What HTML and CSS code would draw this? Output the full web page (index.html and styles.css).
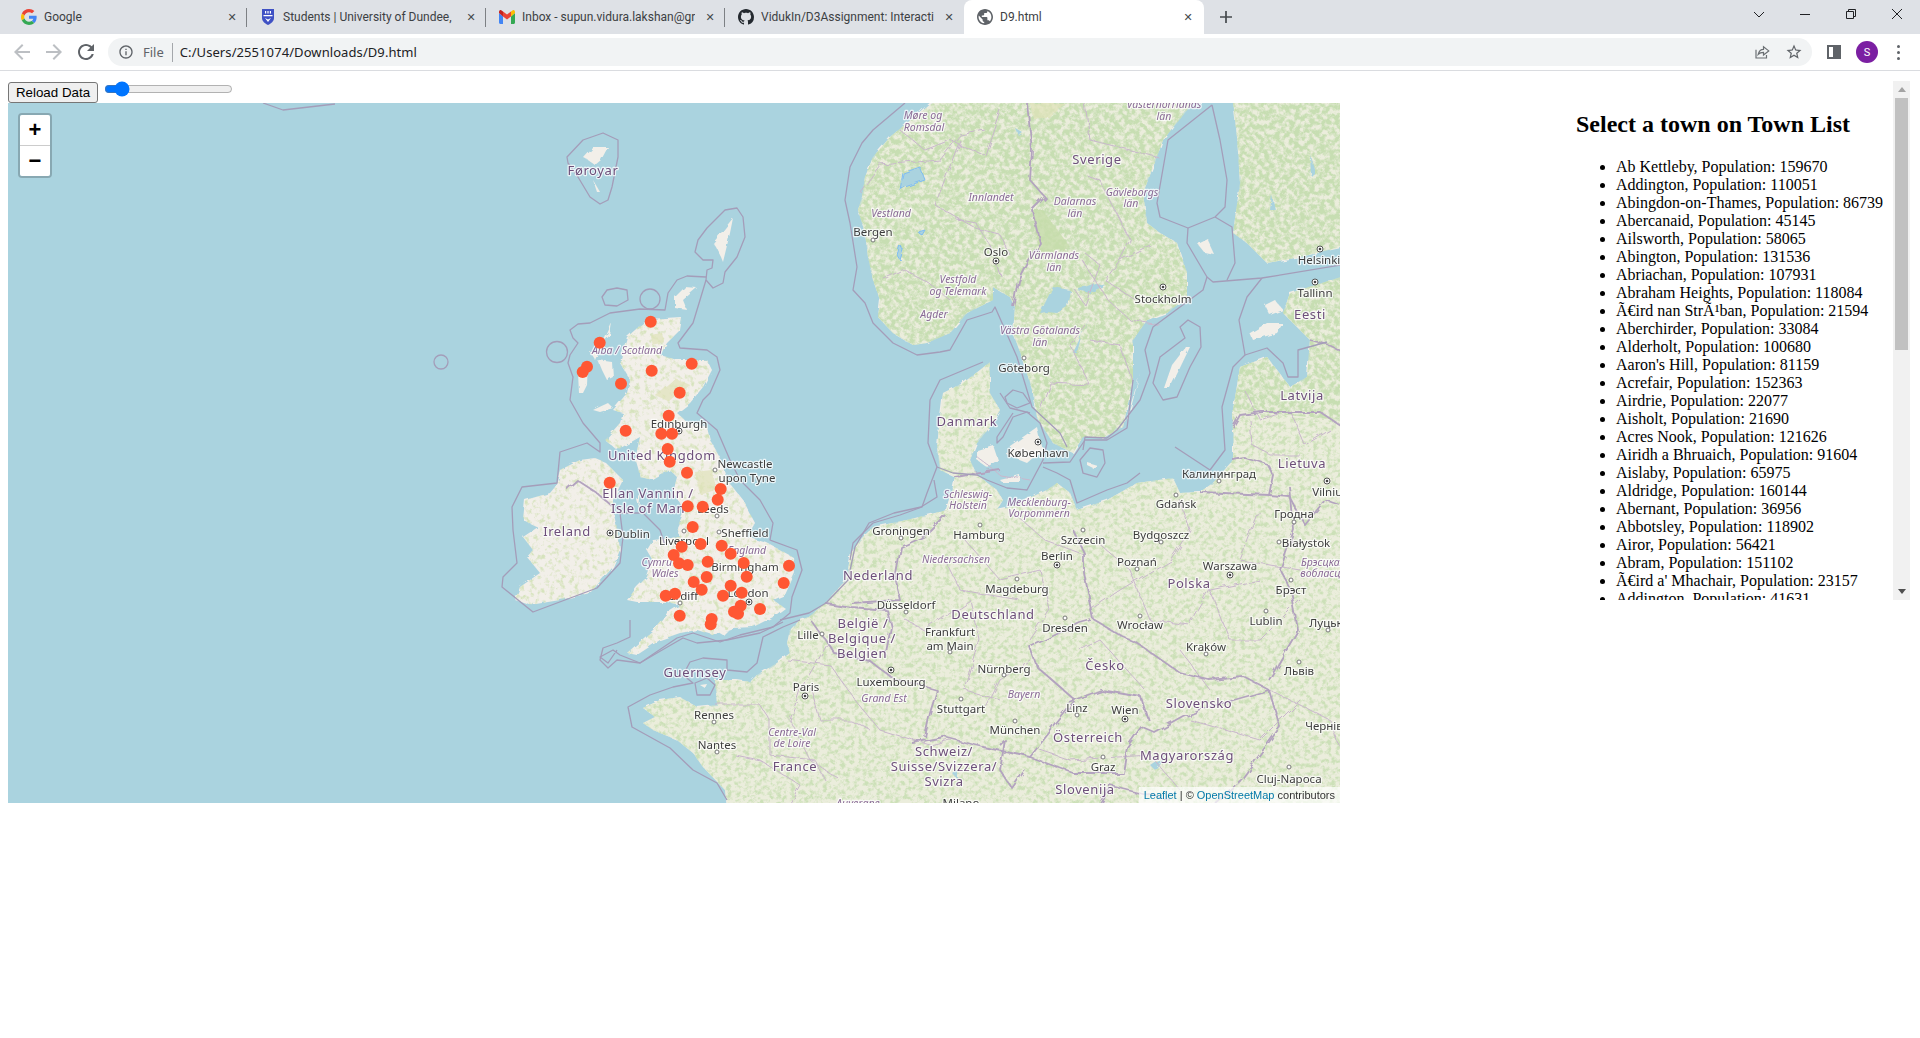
FILE: index.html
```html
<!DOCTYPE html>
<html lang="en">
<head>
<meta charset="utf-8">
<title>D9.html</title>
<link rel="stylesheet" href="styles.css">
</head>
<body>
<header class="chrome">
  <div class="tabstrip">
    <div class="tab sep">
      <svg class="favicon" viewBox="0 0 48 48"><path fill="#EA4335" d="M24 9.5c3.54 0 6.71 1.22 9.21 3.6l6.85-6.85C35.9 2.38 30.47 0 24 0 14.62 0 6.51 5.38 2.56 13.22l7.98 6.19C12.43 13.72 17.74 9.5 24 9.5z"/><path fill="#4285F4" d="M46.98 24.55c0-1.57-.15-3.09-.38-4.55H24v9.02h12.94c-.58 2.96-2.26 5.48-4.78 7.18l7.73 6c4.51-4.18 7.09-10.36 7.09-17.65z"/><path fill="#FBBC05" d="M10.53 28.59c-.48-1.45-.76-2.99-.76-4.59s.27-3.14.76-4.59l-7.98-6.19C.92 16.46 0 20.12 0 24c0 3.88.92 7.54 2.56 10.78l7.97-6.19z"/><path fill="#34A853" d="M24 48c6.48 0 11.93-2.13 15.89-5.81l-7.73-6c-2.15 1.45-4.92 2.3-8.16 2.3-6.26 0-11.57-4.22-13.47-9.91l-7.98 6.19C6.51 42.62 14.62 48 24 48z"/></svg>
      <span class="tabtitle">Google</span><span class="tabclose">✕</span>
    </div>
    <div class="tab sep">
      <svg class="favicon" viewBox="0 0 16 16"><path fill="#3f51c4" d="M2 0h12v9c0 3.5-3 5.5-6 7-3-1.500-6-3.500-6-7z"/><path fill="#fff" d="M3.500 6h9v1.200h-9zM5 2h1.200v2.500H5zM7.400 2h1.200v2.500H7.400zM9.800 2H11v2.500H9.800zM5 9l3 4 3-4-3 1.500z"/></svg>
      <span class="tabtitle">Students | University of Dundee,</span><span class="tabclose">✕</span>
    </div>
    <div class="tab sep">
      <svg class="favicon" viewBox="0 0 16 14"><path fill="#4285f4" d="M0 3v9.500C0 13.300.7 14 1.500 14H4V6.500z"/><path fill="#34a853" d="M12 6.500V14h2.500c.8 0 1.500-.7 1.500-1.500V3z"/><path fill="#ea4335" d="M4 6.500 8 9.500l4-3V1.500L8 4.500 4 1.500z"/><path fill="#c5221f" d="M0 3l4 3.500v-5L2.500.4C1.300-.5 0 .5 0 2z"/><path fill="#fbbc04" d="M16 3l-4 3.500v-5L13.500.4C14.700-.5 16 .5 16 2z"/></svg>
      <span class="tabtitle">Inbox - supun.vidura.lakshan@gr</span><span class="tabclose">✕</span>
    </div>
    <div class="tab">
      <svg class="favicon" viewBox="0 0 16 16"><path fill="#24292f" d="M8 0C3.58 0 0 3.58 0 8c0 3.54 2.29 6.53 5.47 7.59.4.07.55-.17.55-.38 0-.19-.01-.82-.01-1.49-2.01.37-2.53-.49-2.69-.94-.09-.23-.48-.94-.82-1.13-.28-.15-.68-.52-.01-.53.63-.01 1.08.58 1.23.82.72 1.21 1.87.87 2.33.66.07-.52.28-.87.51-1.07-1.78-.2-3.64-.89-3.64-3.95 0-.87.31-1.59.82-2.15-.08-.2-.36-1.02.08-2.12 0 0 .67-.21 2.2.82.64-.18 1.32-.27 2-.27.68 0 1.36.09 2 .27 1.53-1.04 2.2-.82 2.2-.82.44 1.1.16 1.92.08 2.12.51.56.82 1.27.82 2.15 0 3.07-1.87 3.75-3.65 3.95.29.25.54.73.54 1.48 0 1.07-.01 1.93-.01 2.2 0 .21.15.46.55.38A8.013 8.013 0 0016 8c0-4.42-3.58-8-8-8z"/></svg>
      <span class="tabtitle">VidukIn/D3Assignment: Interactiv</span><span class="tabclose">✕</span>
    </div>
    <div class="tab active">
      <svg class="favicon" viewBox="2 2 20 20"><path fill="#5f6368" d="M12 2C6.48 2 2 6.48 2 12s4.48 10 10 10 10-4.48 10-10S17.52 2 12 2zm-1 17.930c-3.950-.49-7-3.850-7-7.930 0-.62.08-1.210.21-1.790L9 15v1c0 1.100.9 2 2 2v1.930zm6.900-2.540c-.26-.81-1-1.390-1.900-1.390h-1v-3c0-.55-.45-1-1-1H8v-2h2c.55 0 1-.45 1-1V7h2c1.100 0 2-.9 2-2v-.41c2.930 1.190 5 4.060 5 7.410 0 2.080-.8 3.970-2.100 5.390z"/></svg>
      <span class="tabtitle">D9.html</span><span class="tabclose">✕</span>
    </div>
    <svg class="newtab" viewBox="0 0 14 14"><path d="M7 1v12M1 7h12"/></svg>
    <div class="winctl">
      <svg viewBox="0 0 12 12"><path d="M1 4l5 5 5-5"/></svg>
      <svg viewBox="0 0 12 12"><path d="M1 6.500h10"/></svg>
      <svg viewBox="0 0 12 12"><path d="M1.500 3.500h7v7h-7zM3.500 3.500v-2h7v7h-2"/></svg>
      <svg viewBox="0 0 12 12"><path d="M1 1l10 10M11 1L1 11"/></svg>
    </div>
  </div>
  <div class="toolbar">
    <svg class="tbicon faint" viewBox="0 0 24 24"><path d="M20 11H7.830l5.590-5.590L12 4l-8 8 8 8 1.410-1.410L7.830 13H20v-2z"/></svg>
    <svg class="tbicon faint" viewBox="0 0 24 24"><path d="M12 4l-1.410 1.410L16.170 11H4v2h12.170l-5.580 5.590L12 20l8-8z"/></svg>
    <svg class="tbicon" viewBox="0 0 24 24"><path d="M17.650 6.350C16.200 4.900 14.210 4 12 4c-4.420 0-7.990 3.580-7.990 8s3.570 8 7.990 8c3.730 0 6.840-2.550 7.730-6h-2.080c-.82 2.330-3.040 4-5.650 4-3.310 0-6-2.690-6-6s2.690-6 6-6c1.660 0 3.140.69 4.220 1.780L13 11h7V4l-2.350 2.350z"/></svg>
    <div class="omnibox">
      <svg class="omniinfo" viewBox="0 0 24 24"><path d="M11 7h2v2h-2zm0 4h2v6h-2zm1-9C6.480 2 2 6.480 2 12s4.480 10 10 10 10-4.480 10-10S17.520 2 12 2zm0 18c-4.410 0-8-3.590-8-8s3.590-8 8-8 8 3.590 8 8-3.590 8-8 8z"/></svg>
      <span class="scheme">File</span>
      <span class="url">C:/Users/2551074/Downloads/D9.html</span>
      <svg class="omniaction share" viewBox="0 0 24 24"><path d="M4 9v11h14v-4M7 15c1-4 4-6.500 7-6.500V5l7 5.500-7 5.500v-3.500c-3 0-5 .5-7 2.500z"/></svg>
      <svg class="omniaction star" viewBox="0 0 24 24"><path d="M22 9.240l-7.190-.62L12 2 9.190 8.630 2 9.240l5.460 4.730L5.820 21 12 17.270 18.180 21l-1.630-7.030L22 9.240zM12 15.400l-3.760 2.270 1-4.280-3.320-2.880 4.380-.38L12 6.100l1.710 4.040 4.380.38-3.320 2.880 1 4.280L12 15.400z"/></svg>
    </div>
    <div class="sidepanel"><span></span></div>
    <div class="avatar">S</div>
    <div class="kebab"><i></i><i></i><i></i></div>
  </div>
</header>

<main class="page">
  <section class="left">
    <div class="controls">
      <button class="reload" type="button">Reload Data</button>
      <input class="slider" type="range" min="0" max="100" value="9">
    </div>
    <div class="map">
      <svg class="mapsvg" viewBox="8 103 1332 700" width="1332" height="700">
        <defs>
          <filter id="rough" x="0" y="0" width="1" height="1"><feTurbulence type="fractalNoise" baseFrequency="0.09" numOctaves="3" seed="4"/><feDisplacementMap in="SourceGraphic" scale="5"/></filter>
          <filter id="wiggle" x="0" y="0" width="1" height="1"><feTurbulence type="fractalNoise" baseFrequency="0.07" numOctaves="3" seed="9"/><feDisplacementMap in="SourceGraphic" scale="7"/></filter>
          <filter id="forestDense" x="0" y="0" width="1" height="1" color-interpolation-filters="sRGB"><feTurbulence type="fractalNoise" baseFrequency="0.2" numOctaves="4" seed="7"/><feColorMatrix values="0 0 0 0 .78  0 0 0 0 .87  0 0 0 0 .70  3.500 0 0 0 -1.150"/></filter>
          <filter id="forestMid" x="0" y="0" width="1" height="1" color-interpolation-filters="sRGB"><feTurbulence type="fractalNoise" baseFrequency="0.22" numOctaves="4" seed="11"/><feColorMatrix values="0 0 0 0 .80  0 0 0 0 .88  0 0 0 0 .72  3.500 0 0 0 -1.500"/></filter>
          <filter id="forestLight" x="0" y="0" width="1" height="1" color-interpolation-filters="sRGB"><feTurbulence type="fractalNoise" baseFrequency="0.2" numOctaves="4" seed="3"/><feColorMatrix values="0 0 0 0 .84  0 0 0 0 .89  0 0 0 0 .74  3.500 0 0 0 -1.700"/></filter>
          <g id="cap"><circle class="cap-ring" r="3"/><circle class="cap-dot" r="1.300"/></g>
          <clipPath id="clipNorth"><polygon points="933,103 907,123 890,137 873,157 865,177 862,197 858,210 865,233 868,257 873,280 880,300 878,317 893,333 913,345 927,343 950,333 967,313 993,300 993,287 1010,297 1015,307 1013,333 1023,360 1033,393 1037,417 1053,443 1073,453 1083,437 1103,438 1123,427 1133,380 1133,340 1147,320 1167,313 1187,297 1187,273 1177,243 1160,233 1147,223 1143,193 1157,157 1163,140 1193,103"/><polygon points="1233,103 1237,137 1240,183 1233,233 1247,243 1267,263 1300,257 1341,247 1341,103"/><polygon points="1233,410 1240,367 1267,357 1290,387 1307,377 1310,340 1283,313 1290,293 1341,277 1341,420"/></clipPath>
          <clipPath id="clipCont"><polygon points="727,803 725,790 703,767 693,753 677,740 653,730 643,723 655,717 643,708 660,700 680,697 697,707 717,705 715,680 737,680 750,682 757,675 777,663 790,653 787,643 790,630 800,620 809,617 825,603 846,580 851,553 860,540 873,527 907,520 947,510 950,500 955,477 940,470 937,447 940,417 943,393 963,383 980,370 990,362 990,393 1000,410 990,427 977,443 970,460 977,475 997,490 1003,500 997,510 1010,507 1047,490 1057,483 1070,493 1077,510 1107,500 1137,483 1173,478 1180,493 1200,492 1213,483 1233,460 1233,433 1232,410 1341,420 1341,803"/></clipPath>
          <clipPath id="clipUk"><polygon points="643,323 650,320 682,318 680,330 667,343 660,355 677,360 707,360 712,370 703,387 690,403 677,413 687,422 707,427 710,440 720,457 727,480 743,500 755,523 747,537 767,543 793,557 795,573 785,595 773,600 785,608 773,617 753,627 733,628 713,635 697,630 680,633 660,640 637,655 627,653 653,630 667,613 680,605 667,602 637,602 627,600 637,587 647,577 653,560 647,550 653,540 680,537 677,527 685,510 673,493 677,477 670,470 653,480 640,477 635,460 640,437 617,450 605,440 620,423 623,413 613,410 627,393 630,380 620,363 623,350 627,337"/><polygon points="580,460 595,458 605,462 623,480 613,500 613,510 618,533 620,550 613,567 590,593 560,600 530,605 515,600 520,587 540,573 527,557 533,550 523,537 538,527 523,520 525,500 550,493 555,487 560,470"/></clipPath>
        </defs>

        <rect class="sea" x="8" y="103" width="1332" height="700"/>

        <g class="land" filter="url(#rough)">
          <polygon points="933,100 907,123 890,137 873,157 865,177 862,197 858,210 865,233 868,257 873,280 880,300 878,317 893,333 913,345 927,343 950,333 967,313 993,300 993,287 1010,297 1015,307 1013,333 1023,360 1033,393 1037,417 1053,443 1073,453 1083,437 1103,438 1123,427 1133,380 1133,340 1147,320 1167,313 1187,297 1187,273 1177,243 1160,233 1147,223 1143,193 1157,157 1163,140 1193,100"/>
          <polygon points="1233,100 1237,137 1240,183 1233,233 1247,243 1267,263 1300,257 1345,247 1345,100"/>
          <polygon points="727,810 725,790 703,767 693,753 677,740 653,730 643,723 655,717 643,708 660,700 680,697 697,707 717,705 715,680 737,680 750,682 757,675 777,663 790,653 787,643 790,630 800,620 809,617 825,603 846,580 851,553 860,540 873,527 907,520 947,510 950,500 955,477 940,470 937,447 940,417 943,393 963,383 980,370 990,362 990,393 1000,410 990,427 977,443 970,460 977,475 997,490 1003,500 997,510 1010,507 1047,490 1057,483 1070,493 1077,510 1107,500 1137,483 1173,478 1180,493 1200,492 1213,483 1233,460 1233,433 1233,410 1240,367 1267,357 1290,387 1307,377 1310,340 1283,313 1290,293 1345,277 1345,810"/>
          <polygon points="643,323 650,320 682,318 680,330 667,343 660,355 677,360 707,360 712,370 703,387 690,403 677,413 687,422 707,427 710,440 720,457 727,480 743,500 755,523 747,537 767,543 793,557 795,573 785,595 773,600 785,608 773,617 753,627 733,628 713,635 697,630 680,633 660,640 637,655 627,653 653,630 667,613 680,605 667,602 637,602 627,600 637,587 647,577 653,560 647,550 653,540 680,537 677,527 685,510 673,493 677,477 670,470 653,480 640,477 635,460 640,437 617,450 605,440 620,423 623,413 613,410 627,393 630,380 620,363 623,350 627,337"/>
          <polygon points="580,460 595,458 605,462 623,480 613,500 613,510 618,533 620,550 613,567 590,593 560,600 530,605 515,600 520,587 540,573 527,557 533,550 523,537 538,527 523,520 525,500 550,493 555,487 560,470"/>
        </g>
        <g class="land islands" filter="url(#rough)">
          <polygon points="595,360 612,323 610,335 595,352 590,352"/>
          <polygon points="578,373 588,363 587,385 583,393 579,393"/>
          <polygon points="598,360 612,362 613,377 607,380 602,370"/>
          <polygon points="593,410 608,403 613,408 600,412"/>
          <polygon points="637,500 641,494 639,507"/>
          <polygon points="678,543 690,538 694,545 682,549"/>
          <polygon points="718,632 728,630 723,635"/>
          <polygon points="583,157 592,147 608,147 601,160 595,165 585,158"/>
          <polygon points="593,180 600,192 597,192"/>
          <polygon points="713,243 733,218 730,233 723,262 721,257 716,247"/>
          <polygon points="675,297 685,287 697,288 683,300 687,310 675,308"/>
          <polygon points="1010,446 1037,427 1042,450 1027,463 1007,455"/>
          <polygon points="977,450 993,445 998,460 987,467 977,460"/>
          <polygon points="1000,480 1020,475 1020,483 1003,483"/>
          <polygon points="1087,462 1097,465 1093,468 1087,465"/>
          <polygon points="1164,388 1172,365 1186,347 1190,347 1178,372 1170,388"/>
          <polygon points="1127,417 1140,373 1133,400 1128,420"/>
          <polygon points="1197,243 1207,238 1215,255 1205,253"/>
          <polygon points="1250,333 1267,323 1283,323 1277,333 1253,340"/>
          <polygon points="1265,305 1275,300 1283,310 1270,315"/>
          <polygon points="700,685 707,684 705,688"/>
        </g>

        <g clip-path="url(#clipNorth)"><rect class="tint" x="840" y="100" width="510" height="360"/><rect x="840" y="100" width="510" height="360" filter="url(#forestDense)"/></g>
        <g clip-path="url(#clipCont)"><rect class="tint" x="640" y="360" width="710" height="450"/><rect x="640" y="360" width="710" height="450" filter="url(#forestMid)"/></g>
        <g clip-path="url(#clipUk)"><rect x="510" y="310" width="290" height="350" filter="url(#forestLight)"/></g>

        <g class="patches" filter="url(#rough)">
          <polygon class="p-green" points="1033,210 1043,210 1070,247 1040,253 1036,235"/>
          <polygon class="p-sand" points="1030,103 1065,103 1050,118 1033,118"/>
          <polygon class="p-sand" points="650,335 662,333 664,342 652,345"/>
          <polygon class="p-sand" points="655,395 675,378 690,385 670,402"/>
          <polygon class="p-sand" points="695,472 712,470 715,490 700,495"/>
        </g>

        <g class="water" filter="url(#rough)">
          <polygon points="1040,313 1053,287 1070,290 1067,307 1057,313 1047,312"/>
          <polygon points="1073,353 1090,317 1082,333 1077,353"/>
          <polygon points="1077,290 1095,283 1105,285 1090,293"/>
          <polygon class="lake" points="900,190 903,173 920,167 925,180 905,187"/>
          <polygon class="lake" points="897,255 900,245 903,250 900,260"/>
          <polygon class="lake" points="918,232 925,230 922,235"/>
          <polygon points="1015,128 1022,132 1018,135"/>
          <polygon points="1270,210 1272,195 1275,210"/>
          <polygon points="1310,155 1315,172 1311,176"/>
          <polygon points="953,774 958,770 958,780"/>
          <polygon points="1150,765 1165,755 1155,770"/>
        </g>

        <g class="reg" filter="url(#wiggle)">
          <polyline points="900,130 925,150 950,140 985,155 1000,110"/>
          <polyline points="860,192 880,165 905,163 940,160 960,135 985,130"/>
          <polyline points="960,140 935,205 980,230 1000,235 1010,255"/>
          <polyline points="885,280 905,270 925,280 950,300"/>
          <polyline points="955,218 975,222 990,245 1000,275"/>
          <polyline points="1085,103 1090,140 1130,150 1160,158"/>
          <polyline points="1086,175 1100,180 1130,240 1120,260 1150,245"/>
          <polyline points="1085,253 1100,265 1085,305 1075,290"/>
          <polyline points="1082,260 1108,300 1130,320 1160,325"/>
          <polyline points="1120,260 1105,280 1135,300"/>
          <polyline points="1085,325 1070,345 1090,385 1050,383 1040,410"/>
          <polyline points="1090,340 1120,345 1132,380"/>
          <polyline points="975,455 1000,475 1030,480"/>
          <polyline points="1247,393 1260,420 1290,410 1305,445 1330,430"/>
          <polyline points="1250,420 1252,445 1270,455 1300,455"/>
          <polyline points="830,640 800,690 790,720 810,760 840,780"/>
          <polyline points="787,660 830,665 855,700 880,730 930,745 950,740"/>
          <polyline points="715,705 760,705 770,720 770,755 815,760 825,780"/>
          <polyline points="810,685 820,720 850,720 870,730"/>
          <polyline points="735,755 760,760 800,785 790,803"/>
          <polyline points="905,620 925,630 970,600 980,640 965,690 1000,700"/>
          <polyline points="965,540 1000,580 1040,570 1050,610 1030,640"/>
          <polyline points="1010,510 1045,540 1085,555"/>
          <polyline points="945,560 960,590 1020,600"/>
          <polyline points="985,710 1000,680 1030,660"/>
          <polyline points="1090,610 1120,590 1170,560 1190,530 1180,500"/>
          <polyline points="1095,540 1130,570 1150,620 1190,625 1210,590 1260,580"/>
          <polyline points="1210,590 1230,640 1260,640 1300,600"/>
          <polyline points="1180,650 1210,690"/>
          <polyline points="1260,510 1240,560 1300,570"/>
          <polyline points="1080,650 1100,640 1145,690"/>
          <polyline points="1190,720 1260,740 1300,700"/>
          <polyline points="1040,750 1070,760 1150,755 1180,790"/>
          <polyline points="1270,690 1330,720 1340,750"/>
        </g>

        <g class="ctry" filter="url(#wiggle)">
          <polyline points="1027,103 1032,150 1030,180 1045,197 1032,210 1040,243 1028,260 1018,280 1013,307"/>
          <polyline points="566,490 577,480 597,493 613,507"/>
          <polyline points="810,620 826,640 834,653 869,660 891,677 937,690 930,713 925,737"/>
          <polyline points="826,603 851,607 887,610 891,627 885,657"/>
          <polyline points="851,603 900,600 895,580 901,547 923,537 945,515"/>
          <polyline points="912,743 944,737 983,747 1030,757 1075,700 1037,667 1030,647 1080,623 1091,620"/>
          <polyline points="1073,530 1084,553 1084,573 1094,620"/>
          <polyline points="1094,620 1123,637 1137,643 1180,673 1209,680 1244,677 1269,690"/>
          <polyline points="1269,690 1209,707 1184,717 1155,733 1141,727 1127,747 1123,773 1073,773 1030,757"/>
          <polyline points="1066,703 1101,690 1141,697 1148,720"/>
          <polyline points="1280,570 1291,590 1298,630 1269,680"/>
          <polyline points="1290,487 1294,530 1280,570"/>
          <polyline points="1200,492 1270,495 1269,494"/>
          <polyline points="1233,460 1245,458 1268,465 1273,475 1269,495 1290,497 1305,525 1325,500 1340,505"/>
          <polyline points="1233,427 1240,415 1262,412 1320,412 1340,425"/>
          <polyline points="1269,690 1280,727 1241,780"/>
          <polyline points="1241,780 1215,803"/>
          <polyline points="1100,803 1110,785 1170,800"/>
          <polyline points="1310,340 1330,345 1340,350"/>
          <polyline points="955,477 1000,470"/>
          <polyline points="1000,745 1005,740 1000,770 1012,788 1025,770"/>
        </g>

        <g class="mar">
          <polyline points="263,103 283,110 335,104"/>
          <polygon points="567,157 583,140 603,133 618,140 618,157 612,187 608,200 600,204 590,197 578,177 568,163"/>
          <polygon points="713,260 703,260 695,252 698,240 707,228 725,210 737,208 743,217 745,237 737,257 725,272 723,283 713,288 706,280 707,270 712,268"/>
          <polyline points="706,277 687,276 677,280 668,293 665,310 640,309 610,313 590,323 578,324 570,330 573,338 578,343 570,355 568,363 573,377 570,400"/>
          <polyline points="706,280 700,300 693,323 678,343 680,348 707,350 717,357 720,370 710,393 703,400 697,413 717,430 730,460 740,480 760,500 773,523 770,540 797,550 802,570 792,597 790,613 773,627 740,635 720,642 693,633 677,638 640,663 620,655 613,650 600,657 608,663 617,650"/>
          <polyline points="570,400 583,423 600,443 600,452 587,443 560,452 557,483 522,487 512,507 513,530 517,563 503,577 502,587 533,612 597,588 620,563 623,537 620,513 643,513 660,530 665,545"/>
          <polygon points="602,297 607,290 617,288 627,290 628,300 617,306 605,305"/>
          <circle cx="650" cy="299" r="10"/>
          <circle cx="557" cy="352" r="10.500"/>
          <circle cx="441" cy="362" r="7"/>
          <polyline points="905,103 873,130 862,143 850,167 845,200 850,223 857,267 853,290 865,303 873,323 893,343 917,355 940,352 950,350 967,320 992,312 995,307 1017,357 1032,407 1060,433 1067,447"/>
          <polyline points="1212,105 1168,140 1157,203 1160,217 1188,228 1215,217 1225,207 1227,180 1220,140 1212,105"/>
          <polyline points="1188,228 1187,243 1207,277 1213,282 1262,278 1341,265"/>
          <polyline points="1215,217 1232,227 1235,263 1227,280"/>
          <polyline points="1207,277 1203,290 1153,327 1145,350 1150,373 1140,400 1117,430 1107,438 1085,437 1083,450"/>
          <polygon points="1185,338 1180,327 1188,320 1200,327 1201,347 1190,367 1177,397 1163,400 1153,383 1160,357"/>
          <polyline points="1262,278 1247,297 1239,320 1245,355 1233,367 1222,407 1225,450 1210,470 1175,447"/>
          <polyline points="1245,355 1267,348 1283,363 1288,377 1298,377 1298,350 1327,342"/>
          <polyline points="983,362 940,380 930,400 928,443 937,467 927,493 922,507 900,515 873,523 853,543 850,560"/>
          <polyline points="780,620 809,613 826,603 848,580 855,547 869,523 894,513 921,507 937,497 934,480"/>
          <polyline points="1000,393 1010,408 1030,413"/>
          <polygon points="1005,397 1013,390 1023,393 1030,403 1017,408 1007,403"/>
          <polyline points="1013,413 997,437 997,443 1003,437 1013,417 1027,412 1040,423 1047,443 1043,460 1027,490 1007,488 987,480 977,475 953,473 937,467"/>
          <polyline points="1043,467 1057,473 1070,480 1077,503 1107,490 1127,483 1140,473"/>
          <polygon points="1080,460 1090,448 1103,450 1105,463 1097,477 1083,473"/>
          <polyline points="1043,463 1070,462 1085,440 1107,440 1127,428 1133,380"/>
          <polyline points="800,620 783,627 763,637 757,663 747,672 727,670 727,660 703,658 690,662 683,675 693,683 673,687 650,695 628,707 632,727 670,748 693,770 717,783 727,800"/>
          <polyline points="630,620 630,637 617,643 603,648 600,660 608,668 617,660 640,663 657,653 683,638 697,643 727,640 760,633 783,622 783,622"/>
          <polygon points="695,683 707,678 715,685 710,695 697,695"/>
        </g>

        <g class="labels">
          <g class="country">
            <text x="1097" y="159">Sverige</text><text x="967" y="421">Danmark</text><text x="662" y="455">United Kingdom</text><text x="648" y="493">Ellan Vannin /</text><text x="648" y="508">Isle of Man</text><text x="567" y="531">Ireland</text><text x="593" y="170">Føroyar</text><text x="1310" y="314">Eesti</text><text x="1302" y="395">Latvija</text><text x="1302" y="463">Lietuva</text><text x="878" y="575">Nederland</text><text x="863" y="623">België /</text><text x="862" y="638">Belgique /</text><text x="862" y="653">Belgien</text><text x="993" y="614">Deutschland</text><text x="1189" y="583">Polska</text><text x="1105" y="665">Česko</text><text x="1199" y="703">Slovensko</text><text x="1088" y="737">Österreich</text><text x="1187" y="755">Magyarország</text><text x="944" y="751">Schweiz/</text><text x="944" y="766">Suisse/Svizzera/</text><text x="944" y="781">Svizra</text><text x="1085" y="789">Slovenija</text><text x="795" y="766">France</text><text x="695" y="672">Guernsey</text>
          </g>
          <g class="city">
            <text x="873" y="231">Bergen</text><text x="996" y="251">Oslo</text><text x="1163" y="298">Stockholm</text><text x="1319" y="259">Helsinki</text><text x="1315" y="292">Tallinn</text><text x="1024" y="367">Göteborg</text><text x="1038" y="452">København</text><text x="679" y="423">Edinburgh</text><text x="745" y="463">Newcastle</text><text x="747" y="477">upon Tyne</text><text x="713" y="508">Leeds</text><text x="745" y="532">Sheffield</text><text x="632" y="533">Dublin</text><text x="684" y="540">Liverpool</text><text x="745" y="566">Birmingham</text><text x="748" y="592">London</text><text x="680" y="595">Cardiff</text><text x="808" y="634">Lille</text><text x="714" y="714">Rennes</text><text x="717" y="744">Nantes</text><text x="806" y="686">Paris</text><text x="891" y="681">Luxembourg</text><text x="901" y="530">Groningen</text><text x="979" y="534">Hamburg</text><text x="1083" y="539">Szczecin</text><text x="1161" y="534">Bydgoszcz</text><text x="1176" y="503">Gdańsk</text><text x="1294" y="513">Гродна</text><text x="1306" y="542">Białystok</text><text x="1219" y="473">Калининград</text><text x="1330" y="491">Vilnius</text><text x="1057" y="555">Berlin</text><text x="1137" y="561">Poznań</text><text x="1230" y="565">Warszawa</text><text x="1017" y="588">Magdeburg</text><text x="906" y="604">Düsseldorf</text><text x="950" y="631">Frankfurt</text><text x="950" y="645">am Main</text><text x="1065" y="627">Dresden</text><text x="1140" y="624">Wrocław</text><text x="1266" y="620">Lublin</text><text x="1326" y="622">Луцьк</text><text x="1291" y="589">Брэст</text><text x="1206" y="646">Kraków</text><text x="1299" y="670">Львів</text><text x="1004" y="668">Nürnberg</text><text x="961" y="708">Stuttgart</text><text x="1015" y="729">München</text><text x="1077" y="707">Linz</text><text x="1125" y="709">Wien</text><text x="1103" y="766">Graz</text><text x="1329" y="725">Чернівці</text><text x="1289" y="778">Cluj-Napoca</text><text x="961" y="802">Milano</text>
          </g>
          <g class="state">
            <text x="923" y="115">Møre og</text><text x="924" y="127">Romsdal</text><text x="991" y="197">Innlandet</text><text x="1075" y="201">Dalarnas</text><text x="1075" y="213">län</text><text x="1132" y="192">Gävleborgs</text><text x="1131" y="203">län</text><text x="1164" y="104">Västernorrlands</text><text x="1164" y="116">län</text><text x="891" y="213">Vestland</text><text x="1054" y="255">Värmlands</text><text x="1054" y="267">län</text><text x="958" y="279">Vestfold</text><text x="958" y="291">og Telemark</text><text x="934" y="314">Agder</text><text x="1040" y="330">Västra Götalands</text><text x="1040" y="342">län</text><text x="627" y="350">Alba / Scotland</text><text x="660" y="562">Cymru /</text><text x="665" y="573">Wales</text><text x="747" y="550">England</text><text x="968" y="494">Schleswig-</text><text x="968" y="505">Holstein</text><text x="1039" y="502">Mecklenburg-</text><text x="1039" y="513">Vorpommern</text><text x="956" y="559">Niedersachsen</text><text x="1024" y="694">Bayern</text><text x="884" y="698">Grand Est</text><text x="792" y="732">Centre-Val</text><text x="792" y="743">de Loire</text><text x="1323" y="562">Брэсцкая</text><text x="1323" y="573">вобласць</text><text x="858" y="803">Auvergne</text>
          </g>
        </g>

        <g class="pins">
          <circle cx="1024" cy="358" r="2"/><circle cx="873" cy="240" r="2"/><circle cx="715" cy="470" r="2"/><circle cx="717" cy="516" r="2"/><circle cx="684" cy="531" r="2"/><circle cx="719" cy="532" r="2"/><circle cx="680" cy="603" r="2"/><circle cx="822" cy="634" r="2"/><circle cx="714" cy="722" r="2"/><circle cx="717" cy="752" r="2"/><circle cx="901" cy="538" r="2"/><circle cx="980" cy="525" r="2"/><circle cx="1083" cy="530" r="2"/><circle cx="1161" cy="542" r="2"/><circle cx="1176" cy="495" r="2"/><circle cx="1294" cy="522" r="2"/><circle cx="1279" cy="542" r="2"/><circle cx="1219" cy="481" r="2"/><circle cx="1137" cy="569" r="2"/><circle cx="1017" cy="579" r="2"/><circle cx="906" cy="612" r="2"/><circle cx="950" cy="652" r="2"/><circle cx="1065" cy="618" r="2"/><circle cx="1140" cy="616" r="2"/><circle cx="1266" cy="611" r="2"/><circle cx="1328" cy="630" r="2"/><circle cx="1291" cy="580" r="2"/><circle cx="1206" cy="654" r="2"/><circle cx="1299" cy="662" r="2"/><circle cx="1004" cy="675" r="2"/><circle cx="961" cy="699" r="2"/><circle cx="1015" cy="721" r="2"/><circle cx="1077" cy="715" r="2"/><circle cx="1103" cy="757" r="2"/><circle cx="1289" cy="767" r="2"/>
        </g>
        <use href="#cap" x="996" y="261"/><use href="#cap" x="1163" y="287"/><use href="#cap" x="1320" y="249"/><use href="#cap" x="1315" y="282"/><use href="#cap" x="1038" y="442"/><use href="#cap" x="679" y="431"/><use href="#cap" x="610" y="533"/><use href="#cap" x="749" y="602"/><use href="#cap" x="805" y="696"/><use href="#cap" x="891" y="670"/><use href="#cap" x="1057" y="565"/><use href="#cap" x="1230" y="575"/><use href="#cap" x="1125" y="719"/><use href="#cap" x="1327" y="481"/>

        <g class="towns">
          <circle cx="650.700" cy="321.700" r="6"/><circle cx="599.700" cy="342.700" r="6"/><circle cx="587" cy="366.700" r="6"/><circle cx="582.700" cy="372" r="6"/><circle cx="651.700" cy="370.700" r="6"/><circle cx="691.700" cy="363.700" r="6"/><circle cx="621" cy="383.700" r="6"/><circle cx="679.700" cy="392.700" r="6"/><circle cx="668.700" cy="415.700" r="6"/><circle cx="625.700" cy="430.700" r="6"/><circle cx="661.300" cy="433.700" r="6"/><circle cx="672" cy="433.700" r="6"/><circle cx="667.700" cy="449" r="6"/><circle cx="669.700" cy="461.700" r="6"/><circle cx="687" cy="472.700" r="6"/><circle cx="609.700" cy="482.700" r="6"/><circle cx="720.700" cy="489" r="6"/><circle cx="717.700" cy="499.700" r="6"/><circle cx="687.700" cy="506.300" r="6"/><circle cx="702.700" cy="506.700" r="6"/><circle cx="692.700" cy="527" r="6"/><circle cx="681.700" cy="546.700" r="6"/><circle cx="700.700" cy="544" r="6"/><circle cx="721.700" cy="545.700" r="6"/><circle cx="730.700" cy="553.700" r="6"/><circle cx="673.700" cy="555" r="6"/><circle cx="679" cy="563.300" r="6"/><circle cx="687.700" cy="565" r="6"/><circle cx="707.700" cy="561.700" r="6"/><circle cx="743.700" cy="563" r="6"/><circle cx="789" cy="565.700" r="6"/><circle cx="746.700" cy="576.700" r="6"/><circle cx="706.700" cy="577" r="6"/><circle cx="783.700" cy="583" r="6"/><circle cx="693.700" cy="582" r="6"/><circle cx="730.700" cy="585.700" r="6"/><circle cx="701.700" cy="589.700" r="6"/><circle cx="741.700" cy="592.700" r="6"/><circle cx="723" cy="595.700" r="6"/><circle cx="665.700" cy="595.700" r="6"/><circle cx="675" cy="593.700" r="6"/><circle cx="740.700" cy="605.700" r="6"/><circle cx="734" cy="611.700" r="6"/><circle cx="738" cy="613.700" r="6"/><circle cx="760" cy="609" r="6"/><circle cx="679.700" cy="615.700" r="6"/><circle cx="711.700" cy="619" r="6"/><circle cx="710.700" cy="624.300" r="6"/>
        </g>
      </svg>
      <div class="zoomctl"><a class="zoomin">+</a><a class="zoomout">−</a></div>
      <div class="attrib"><a>Leaflet</a> | © <a>OpenStreetMap</a> contributors</div>
    </div>
  </section>

  <aside class="panel">
    <div class="listbox">
      <h2>Select a town on Town List</h2>
      <ul>
        <li>Ab Kettleby, Population: 159670</li>
        <li>Addington, Population: 110051</li>
        <li>Abingdon-on-Thames, Population: 86739</li>
        <li>Abercanaid, Population: 45145</li>
        <li>Ailsworth, Population: 58065</li>
        <li>Abington, Population: 131536</li>
        <li>Abriachan, Population: 107931</li>
        <li>Abraham Heights, Population: 118084</li>
        <li>Ã€ird nan StrÃ¹ban, Population: 21594</li>
        <li>Aberchirder, Population: 33084</li>
        <li>Alderholt, Population: 100680</li>
        <li>Aaron's Hill, Population: 81159</li>
        <li>Acrefair, Population: 152363</li>
        <li>Airdrie, Population: 22077</li>
        <li>Aisholt, Population: 21690</li>
        <li>Acres Nook, Population: 121626</li>
        <li>Airidh a Bhruaich, Population: 91604</li>
        <li>Aislaby, Population: 65975</li>
        <li>Aldridge, Population: 160144</li>
        <li>Abernant, Population: 36956</li>
        <li>Abbotsley, Population: 118902</li>
        <li>Airor, Population: 56421</li>
        <li>Abram, Population: 151102</li>
        <li>Ã€ird a' Mhachair, Population: 23157</li>
        <li>Addington, Population: 41631</li>
      </ul>
    </div>
    <div class="scrollbar">
      <span class="arrow up"></span>
      <span class="thumb"></span>
      <span class="arrow down"></span>
    </div>
  </aside>
</main>
</body>
</html>
```
FILE: styles.css
```css
* { box-sizing: border-box; }
html, body { margin: 0; height: 100%; background: #fff; overflow: hidden; }
body { font-family: "Liberation Serif", serif; }

/* Browser frame */
.chrome { height: 71px; font-family: "Roboto", sans-serif; color: #3c4043; }
.tabstrip { height: 34px; background: #dee1e6; display: flex; align-items: center; padding-left: 8px; }
.tab { width: 239px; height: 34px; padding: 0 7px 0 13px; display: flex; align-items: center; gap: 7px; font-size: 12px; position: relative; flex: none; }
.tab.sep::after { content: ""; position: absolute; right: 0; top: 8px; height: 19px; width: 1px; background: #7d8084; }
.tab.active { background: #fff; border-radius: 8px 8px 0 0; width: 240px; color: #3c4043; padding-right: 8px; }
.favicon { width: 16px; height: 16px; flex: none; }
.tabtitle { flex: 1; white-space: nowrap; overflow: hidden; min-width: 0; }
.tabclose { width: 16px; text-align: center; font-size: 11px; color: #45494d; flex: none; font-family: "DejaVu Sans", sans-serif; }
.newtab { width: 14px; height: 14px; margin-left: 15px; fill: none; stroke: #45494d; stroke-width: 1.700; }
.winctl { margin-left: auto; display: flex; align-items: center; padding-right: 17px; gap: 34px; margin-top: -6px; }
.winctl svg { width: 12px; height: 12px; fill: none; stroke: #202124; stroke-width: 1; }

.toolbar { height: 37px; background: #fff; border-bottom: 1px solid #dadce0; display: flex; align-items: center; padding: 0 0 0 10px; gap: 8px; }
.tbicon { width: 24px; height: 24px; flex: none; fill: #5f6368; }
.tbicon.faint { fill: #bcbfc3; }
.omnibox { width: 1704px; height: 28px; margin-left: 2px; background: #f1f3f4; border-radius: 14px; display: flex; align-items: center; padding-left: 10px; flex: none; }
.omniinfo { width: 16px; height: 16px; fill: #5f6368; flex: none; }
.scheme { font-size: 13px; color: #5f6368; margin-left: 9px; padding-right: 8px; border-right: 1px solid #a4a7ab; line-height: 19px; font-family: "Noto Sans", sans-serif; }
.url { font-size: 13px; color: #202124; margin-left: 7px; font-family: "Noto Sans", sans-serif; letter-spacing: .08px; }
.omniaction { width: 18px; height: 18px; flex: none; }
.share { margin-left: auto; fill: none; stroke: #6b6f73; stroke-width: 1.600; }
.star { margin: 0 9px 0 14px; fill: #5f6368; }
.sidepanel { width: 14px; height: 14px; margin-left: 7px; border: 2px solid #5f6368; display: flex; justify-content: flex-end; flex: none; }
.sidepanel span { width: 6px; background: #5f6368; }
.avatar { width: 22px; height: 22px; margin-left: 7px; border-radius: 50%; background: #7b1fa2; color: #fff; font-size: 11px; display: flex; align-items: center; justify-content: center; flex: none; }
.kebab { margin-left: 11px; display: flex; flex-direction: column; gap: 3px; flex: none; }
.kebab i { width: 3px; height: 3px; border-radius: 50%; background: #5f6368; display: block; }

/* Page */
.page { display: flex; align-items: flex-start; }
.left { width: 1340px; padding-left: 8px; flex: none; }
.controls { height: 32px; padding-top: 11px; display: flex; align-items: flex-start; }
.reload { width: 90px; height: 21px; padding: 0; font: 13.33px "Liberation Sans", sans-serif; color: #000; background: #efefef; border: 1px solid #767676; border-radius: 3px; }
.slider { width: 129px; height: 16px; margin: -1px 0 0 6px; }

.map { position: relative; width: 1332px; height: 700px; overflow: hidden; background: #aad3df; }
.mapsvg { display: block; }
.sea { fill: #aad3df; }
.land polygon { fill: #f2efe9; }
.tint { fill: #e3ebcf; opacity: .5; }
.patches .p-green { fill: #c6dcaa; opacity: .8; }
.patches .p-sand { fill: #dfe3b9; opacity: .7; }
.water polygon { fill: #aad3df; }
.water .lake { stroke: #7fbcf2; stroke-width: 1; }
.reg polyline { fill: none; stroke: #c9b7cc; stroke-width: 1; stroke-linejoin: round; }
.ctry polyline { fill: none; stroke: #b3a3bf; stroke-width: 1.800; stroke-linejoin: round; }
.mar polyline, .mar polygon, .mar circle { fill: none; stroke: #a49db9; stroke-width: 1.300; stroke-linejoin: round; }

.labels text { text-anchor: middle; dominant-baseline: central; font-family: "Noto Sans", sans-serif; paint-order: stroke; stroke: rgba(255,255,255,.75); stroke-width: 2.500px; stroke-linejoin: round; }
.country text { font-size: 13px; letter-spacing: .6px; fill: #6d4f7a; }
.city text { font-size: 11.500px; fill: #3d3d3d; }
.state text { font-size: 10.500px; font-style: italic; fill: #8a6b96; }
.pins circle { fill: #fff; stroke: #777; stroke-width: 1; }
.cap-ring { fill: #fff; stroke: #555; stroke-width: 1; }
.cap-dot { fill: #444; }
.towns circle { fill: #ff5733; }

.zoomctl { position: absolute; left: 10px; top: 10px; width: 34px; border: 2px solid rgba(0,0,0,.2); border-radius: 4px; background-clip: padding-box; display: flex; flex-direction: column; }
.zoomctl a { width: 30px; height: 30px; background: #fff; color: #000; display: flex; align-items: center; justify-content: center; font: bold 22px "Liberation Sans", sans-serif; }
.zoomin { border-bottom: 1px solid #ccc; border-radius: 2px 2px 0 0; height: 31px !important; }
.zoomout { border-radius: 0 0 2px 2px; }
.attrib { position: absolute; right: 0; bottom: 0; padding: 0 5px; background: rgba(255,255,255,.7); font: 11px/16px "Liberation Sans", sans-serif; color: #333; }
.attrib a { color: #0078a8; }

/* Town panel */
.panel { width: 570px; margin-top: 10px; padding-left: 216px; display: flex; height: 519px; }
.listbox { flex: 1; min-width: 0; height: 519px; overflow: hidden; color: #000; font-size: 16px; line-height: 18px; padding-left: 20px; white-space: nowrap; }
.listbox h2 { margin: 30px 0 20px; font-size: 24px; line-height: 27px; font-weight: bold; }
.listbox ul { margin: 0; padding-left: 40px; }
.scrollbar { width: 17px; flex: none; background: #f1f1f1; display: flex; flex-direction: column; align-items: center; }
.thumb { width: 13px; height: 252px; background: #c1c1c1; flex: none; }
.arrow { width: 0; height: 0; border-left: 4px solid transparent; border-right: 4px solid transparent; flex: none; }
.arrow.up { border-bottom: 5px solid #a3a3a3; margin: 6px 0; }
.arrow.down { border-top: 5px solid #505050; margin: auto 0 6px; }
```
